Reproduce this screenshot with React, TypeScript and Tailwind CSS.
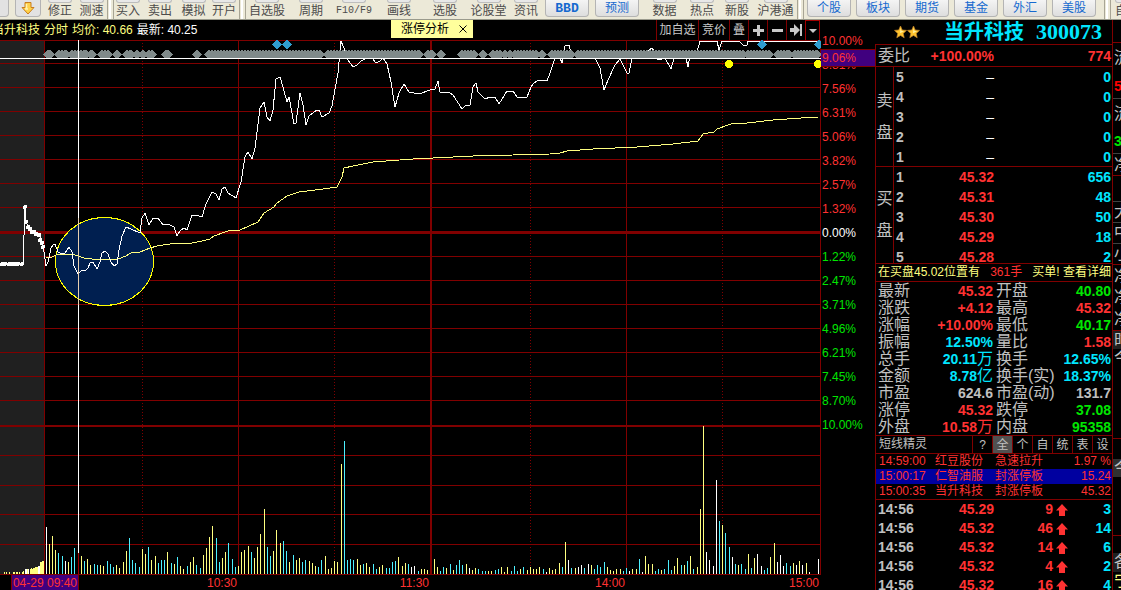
import React from 'react';

type Tone = 'red' | 'green' | 'cyan' | 'gray';

const toneClass: Record<Tone, string> = {
  red: 'text-[#ff3232]',
  green: 'text-[#00e600]',
  cyan: 'text-[#00e6ff]',
  gray: 'text-[#c0c0c0]',
};

/* ---------- Toolbar ---------- */

interface ToolItem {
  label: string;
  width: string;
}

const toolGroups: ToolItem[][] = [
  [
    { label: '修正', width: 'w-8' },
    { label: '测速', width: 'w-[31px]' },
  ],
  [
    { label: '买入', width: 'w-7' },
    { label: '卖出', width: 'w-9' },
    { label: '模拟', width: 'w-[31px]' },
    { label: '开户', width: 'w-[30px]' },
  ],
  [
    { label: '自选股', width: 'w-[42px]' },
    { label: '周期', width: 'w-[46px]' },
    { label: 'F10/F9', width: 'w-10' },
    { label: '画线', width: 'w-[50px]' },
    { label: '选股', width: 'w-[42px]' },
    { label: '论股堂', width: 'w-[45px]' },
    { label: '资讯', width: 'w-[30px]' },
  ],
];

const dataTools: ToolItem[] = [
  { label: '数据', width: 'w-[39px]' },
  { label: '热点', width: 'w-9' },
  { label: '新股', width: 'w-[34px]' },
  { label: '沪港通', width: 'w-[43px]' },
];

const markets = ['个股', '板块', '期货', '基金', '外汇', '美股'];

const ToolButton: React.FC<{ item: ToolItem }> = ({ item }) => (
  <button type="button" className={`${item.width} flex h-full shrink-0 flex-col items-center text-xs leading-4 whitespace-nowrap text-[#4c4c4c]`}>
    <span className="h-[3px] w-6 shrink-0 rounded-b-sm border border-t-0 border-[#bdbdbd] bg-[#e8e8e8]" />
    {item.label === 'F10/F9' ? <span className="font-['Liberation_Mono',monospace] text-[10px]">{item.label}</span> : item.label}
  </button>
);

const Divider = () => (
  <span className="flex h-full w-[7px] shrink-0 justify-between border-l border-[#a8a595] bg-white">
    <span className="w-px bg-[#ece9d8]" />
    <span className="w-[3px] border-r border-[#a8a595] bg-[#ece9d8]" />
  </span>
);

const PillButton: React.FC<{ label: string }> = ({ label }) => (
  <button type="button" className="h-[17px] w-11 shrink-0 rounded-b-sm border border-t-0 border-[#b4b4b4] bg-linear-to-b from-[#f4f4f4] to-[#dedede] text-xs leading-4 text-[#1569cf]">
    {label === 'BBD' ? <b className="font-['Liberation_Mono',monospace] text-[13px]">{label}</b> : label}
  </button>
);

const Toolbar = () => (
  <header className="flex h-5 shrink-0 overflow-hidden border-b border-[#9a9a8c] bg-[#ece9d8]">
    <span className="mr-1.5 h-[17px] w-[9px] shrink-0 rounded-br-sm border border-t-0 border-l-0 border-[#b4b4b4] bg-[#e2e2e2]" />
    <button type="button" aria-label="下载" className="mr-[3px] flex h-[17px] w-[26px] shrink-0 items-start justify-center rounded-b-sm border border-t-0 border-[#b4b4b4] bg-[#e2e2e2]">
      <svg width="14" height="15" viewBox="0 0 14 15">
        <path d="M4 2.5h6v5h3L7 14 1 7.5h3z" fill="#ffd24a" stroke="#c87d1e" />
        <path d="M5.5 4v5M4 9h3" stroke="#fff3b0" strokeWidth="1.5" />
      </svg>
    </button>
    {toolGroups.map((group, i) => (
      <React.Fragment key={i}>
        {i > 0 && <Divider />}
        {group.map(item => <ToolButton key={item.label} item={item} />)}
      </React.Fragment>
    ))}
    <div className="mr-1.5 ml-1 flex shrink-0 gap-1.5">
      <PillButton label="BBD" />
      <PillButton label="预测" />
    </div>
    {dataTools.map(item => <ToolButton key={item.label} item={item} />)}
    <Divider />
    <div className="mr-2 ml-[3px] flex shrink-0 gap-[5px]">
      {markets.map(name => <PillButton key={name} label={name} />)}
    </div>
    <Divider />
    <ToolButton item={{ label: '自选', width: 'w-8' }} />
  </header>
);

/* ---------- Intraday chart ---------- */

const priceLine =
  '44,252 46,266 48,262 49,258 51,248 53,245 55,244 58,252 62,254 65,253 69,247 72,252 74,266 78,274 82,270 85,271 88,268 90,263 93,262 97,269 100,262 102,253 105,251 108,254 111,262 114,266 117,264 119,250 122,236 126,227 131,229 140,233 142,218 145,213 149,225 153,218 158,218 163,225 168,224 174,227 177,236 180,231 184,228 187,230 192,215 196,215 202,217 206,204 212,192 216,194 219,200 222,189 225,187 228,193 236,198 241,182 245,157 248,152 252,159 255,148 260,108 264,102 267,117 270,121 273,110 276,79 280,77 283,87 287,102 289,97 294,124 296,123 300,93 303,105 306,125 309,116 317,110 319,110 322,117 329,113 332,106 338,73 341,41 346,53 348,60 353,67 357,65 361,61 367,58 372,58 376,63 380,61 383,58 387,64 391,82 395,107 399,93 404,84 409,92 419,94 430,90 435,89 438,81 440,92 450,93 453,95 462,109 466,105 470,105 473,87 476,83 478,92 485,99 490,97 495,97 499,104 507,91 513,91 517,97 527,97 531,87 534,83 539,80 547,81 550,73 555,58 560,58 562,63 565,46 569,45 571,52 580,57 595,58 600,68 604,90 608,80 615,65 620,59 627,73 629,73 632,58 640,59 648,51 652,48 654,51 658,60 665,58 671,69 674,58 686,58 688,67 690,55 697,52 700,41 717,41 719,50 722,41 739,41 743,45 747,45 748,41 818,41';

const averageLine =
  '46,258 52,257 56,255 72,254 78,256 84,258 92,259 118,259 126,256 131,253 140,252 150,248 157,246 170,244 192,243 202,241 210,239 214,236 228,231 240,230 258,222 264,213 274,207 277,203 287,196 299,192 323,189 337,187 342,177 344,168 353,166 373,162 413,159 473,156 513,155 550,154 560,153 567,151 593,149 637,147 673,144 698,141 703,134 714,132 717,129 731,124 747,123 773,120 801,118 818,117';

// x, colour (y/c/w), height
const volumes =
  '46w47 49y30 52y38 55y24 58c21 62c18 65w13 68y12 71c17 74c26 81y18 84c13 87y15 90y9 94c10 97c9 100y9 103y8 107c13 110c10 113c7 116y9 119y6 123y12 126y23 129c36 132c14 135c11 139c7 142y25 145y20 148c27 151y14 155y18 158c11 161c14 164c14 167y22 171c11 174y10 177c17 180y8 183y5 187c8 190y12 193y17 196c9 200c6 203y19 206y26 209y37 212y48 216c36 219c12 222y16 225y22 228c31 232c15 235c7 238y8 241y22 244y24 248y28 251c22 254y16 257y27 260y40 264y65 267c27 270c18 273y23 276y44 280y31 283c33 286c23 289y12 293c19 296y14 299y16 302c12 305c14 309y13 312y11 315y8 318c7 321c14 325y18 328y5 331y6 334y13 337y12 341y110 344c133 347c14 350c15 353c14 357y15 360y9 363c10 366y11 369y7 373c10 376c5 379y7 382y9 386c6 389c6 392c12 395c13 398y17 402y8 405y11 408c10 411w7 414w8 418c3 421y5 424y5 427y4 434y15 437y7 440c3 443c7 446y6 450c10 453y4 456c9 459c14 462c9 466y10 469w6 472y4 475y6 478c5 482c3 485c3 488y3 491y3 495c4 498c5 501y7 504y2 507y7 511c3 514c8 517c3 520y5 523c7 527y4 530y7 533y5 536y5 539y7 543c5 546w2 549y6 552y4 555y5 559y11 562c7 565y32 568w14 571c6 575y6 578w7 581w9 584c6 588w10 591y9 594c5 597c9 600c7 604c12 607y7 610y4 613y3 616y5 620y5 623c3 626c6 629w3 632y5 636y5 639c15 642w2 645y18 648y10 652y10 655c3 658c5 661y4 664c5 668c14 671c4 674y8 677y16 681c9 684y9 687c13 690y18 693c5 697y7 700y65 703y148 706w22 709w14 713w8 716w94 719c53 722y49 725c41 729c27 732w17 735c10 738y9 741c10 745c5 748y20 751c6 754y16 757w20 761w8 764c4 767c6 770y17 774y31 777w12 780w19 783w8 786c11 790c8 793y11 796w9 799y13 802w9 806y11 809w2 818w15';

const preVolumes =
  '4y2 6y2 9y2 13y2 14y2 16y2 17y2 19y2 22y2 23y3 25w5 26w5 27y5 28w5 30y5 31y6 32y5 33y6 34y6 35y7 36y7 37y7 38w8 39w8 40y12 41y12 42y13 43y13';

const volumeColor: Record<string, string> = { y: '#ffff80', c: '#4df0ff', w: '#ffffff' };

const parseBars = (text: string) =>
  text.split(' ').map(token => {
    const [, x, color, height] = token.match(/(\d+)([ycw])(\d+)/)!;
    return { x: Number(x), fill: volumeColor[color], height: Number(height) };
  });

const bars = parseBars(`${preVolumes} ${volumes}`);

// [first, last] centre of every run of signal markers
const markerRuns = [
  [47, 49], [58, 65], [71, 85], [90, 91], [101, 107], [116, 116], [126, 130], [136, 136], [142, 142], [148, 151],
  [165, 167], [196, 196], [208, 319], [327, 418], [427, 431], [440, 440], [461, 473], [482, 482], [492, 492],
  [496, 499], [504, 504], [509, 509], [514, 535], [541, 541], [551, 570], [577, 742], [747, 768], [777, 788], [794, 816],
];

const markers = markerRuns.flatMap(([first, last]) => {
  const xs: number[] = [];
  for (let x = first; x < last; x += 3) xs.push(x);
  return [...xs, last];
});

const diamond = (x: number, y: number, r: number) => `M${x - r} ${y}L${x} ${y - r}L${x + r} ${y}L${x} ${y + r}z`;

const gridRows = [40, 63, 87, 111, 135, 159, 183, 207, 256, 280, 304, 328, 352, 376, 400, 455, 485, 514, 544, 574];
const preDots = [[25, 207], [26, 222], [28, 227], [30, 229], [32, 232], [34, 232], [36, 234], [39, 235], [40, 240], [42, 243], [43, 247]];
const openDots = [2, 5, 9, 12, 15, 18, 22];

const PriceChart = () => (
  <svg viewBox="0 40 821 535" preserveAspectRatio="none" shapeRendering="crispEdges" className="block min-h-0 w-full flex-1">
    <rect x="0" y="40" width="44" height="535" fill="#202020" />
    <g fill="#800000">
      {gridRows.map(y => <rect key={y} x="0" y={y} width="821" height="1" />)}
      <rect x="0" y="231" width="821" height="3" />
      <rect x="0" y="425" width="821" height="2" />
      {[44, 238, 626, 820].map(x => <rect key={x} x={x} y="40" width="1" height="535" />)}
      <rect x="430" y="40" width="2" height="535" />
    </g>
    <path d="M142.5 43V574M334.5 43V574M530.5 43V574M722.5 43V574" stroke="#800000" strokeDasharray="1 2" />

    <ellipse cx="104.5" cy="261.5" rx="49" ry="44" fill="#001f50" stroke="#ffff00" />
    {bars.map(bar => <rect key={bar.x} x={bar.x} y={574 - bar.height} width="1" height={bar.height} fill={bar.fill} />)}

    <polyline points={averageLine} fill="none" stroke="#ffff80" />
    <polyline points={priceLine} fill="none" stroke="#ffffff" />
    <path d="M0 264H23L25 207L26 222L29 228L40 236L44 252" fill="none" stroke="#ffffff" />
    {preDots.map(([x, y]) => <circle key={`${x}-${y}`} cx={x} cy={y} r="2" fill="#ffffff" />)}
    {openDots.map(x => <circle key={x} cx={x} cy="264" r="2" fill="#ffffff" />)}

    {markers.map(x => <path key={x} d={diamond(x + 0.5, 54.5, 5)} fill="#808a8a" />)}
    {[276.5, 286.5, 761.5, 818.5].map(x => <path key={x} d={diamond(x, 44.5, 5)} fill="#2f9ccf" />)}
    <circle cx="729" cy="64" r="4" fill="#ffff00" />
    <circle cx="818" cy="64" r="4" fill="#ffff00" />

    {/* crosshair */}
    <rect x="0" y="58" width="821" height="1" fill="#ffffff" />
    <rect x="78" y="40" width="1" height="513" fill="#ffffff" />
    <rect x="78" y="218" width="1" height="87" fill="#e8d0b0" />
    <rect x="78" y="553" width="1" height="21" fill="#a00000" />
  </svg>
);

const scale = ['10.00%', '8.81%', '7.56%', '6.31%', '5.06%', '3.82%', '2.57%', '1.32%', '0.00%', '1.22%', '2.47%', '3.71%', '4.96%', '6.21%', '7.45%', '8.70%', '10.00%'];

const ZERO_INDEX = 8;

const scaleColor = (i: number) => {
  if (i === ZERO_INDEX) return 'text-white';
  return i < ZERO_INDEX ? 'text-[#ff3232]' : 'text-[#00e600]';
};

const iconButton = 'flex w-[19px] items-center justify-center border-l border-[#800000]';

const ChartHeader = () => (
  <div className="flex h-5 shrink-0 overflow-hidden text-xs leading-5 whitespace-nowrap">
    <p className="flex w-[391px] gap-1 text-[#ffff80]">
      <span className="-ml-2">当升科技</span>
      <span>分时</span>
      <span>均价: 40.66</span>
      <span className="text-white">最新: 40.25</span>
    </p>
    <div className="flex h-[18px] items-center gap-2.5 bg-[#ffff9c] pr-1.5 pl-2.5 text-black">
      <span className="leading-4">涨停分析</span>
      <button type="button" aria-label="关闭">
        <svg width="8" height="8" viewBox="0 0 8 8"><path d="M.5.5l7 7M7.5.5l-7 7" stroke="#000" /></svg>
      </button>
    </div>
    <div className="mr-px ml-auto flex text-[#c8c8c8]">
      <button type="button" className="w-[42px] border-l border-[#800000]">加自选</button>
      <button type="button" className="w-[31px] border-l border-[#800000]">竞价</button>
      <button type="button" className="w-[19px] border-l border-[#800000]">叠</button>
      <button type="button" aria-label="放大" className={iconButton}>
        <svg width="11" height="11" viewBox="0 0 11 11"><path d="M5.5 0v11M0 5.5h11" stroke="#c8c8c8" strokeWidth="3" /></svg>
      </button>
      <button type="button" aria-label="缩小" className={iconButton}>
        <svg width="11" height="11" viewBox="0 0 11 11"><path d="M0 5.5h11" stroke="#c8c8c8" strokeWidth="3" /></svg>
      </button>
      <button type="button" aria-label="末尾" className={iconButton}>
        <svg width="12" height="12" viewBox="0 0 12 12"><path d="M0 4h4V0l6 6-6 6V8H0zM10 0h2v12h-2z" fill="#c8c8c8" /></svg>
      </button>
      <button type="button" aria-label="更多" className="flex w-[15px] items-center justify-center border border-b-0 border-[#a00000]">
        <svg width="8" height="4" viewBox="0 0 8 4"><path d="M0 0h8L4 4z" fill="#c8c8c8" /></svg>
      </button>
    </div>
  </div>
);

const TimeAxis = () => (
  <div className="grid h-[15px] shrink-0 grid-cols-[79fr_160fr_192fr_196fr_194fr] text-right text-xs leading-4 text-[#ff3232]">
    <span className="flex justify-end"><span className="border-r border-l border-[#800000] bg-[#40007f] px-px whitespace-nowrap">04-29 09:40</span></span>
    {['10:30', '11:30', '14:00', '15:00'].map(time => <span key={time} className="pr-0.5">{time}</span>)}
  </div>
);

const ChartPanel = () => (
  <main className="flex min-w-0 flex-1">
    <section className="flex min-w-0 flex-1 flex-col">
      <ChartHeader />
      <PriceChart />
      <TimeAxis />
    </section>
    <aside className="relative flex w-[54px] shrink-0 flex-col pt-[9px] pb-[153px] text-xs">
      {scale.map((label, i) => (
        <span key={i} className={`flex flex-1 items-center pl-px ${scaleColor(i)}`}>{label}</span>
      ))}
      <span className="absolute top-[29px] left-0 flex h-[18px] w-full items-center border-y border-[#800000] bg-[#40007f] pl-px text-[#ff3232]">9.06%</span>
    </aside>
  </main>
);

/* ---------- Quote panel ---------- */

const sells = [5, 4, 3, 2, 1].map(level => ({ level, price: '–', volume: '0' }));
const buys = [
  { level: 1, price: '45.32', volume: '656' },
  { level: 2, price: '45.31', volume: '48' },
  { level: 3, price: '45.30', volume: '50' },
  { level: 4, price: '45.29', volume: '18' },
  { level: 5, price: '45.28', volume: '2' },
];

interface Stat {
  name: string;
  value: string;
  tone: Tone;
}

const stats: [Stat, Stat][] = [
  [{ name: '最新', value: '45.32', tone: 'red' }, { name: '开盘', value: '40.80', tone: 'green' }],
  [{ name: '涨跌', value: '+4.12', tone: 'red' }, { name: '最高', value: '45.32', tone: 'red' }],
  [{ name: '涨幅', value: '+10.00%', tone: 'red' }, { name: '最低', value: '40.17', tone: 'green' }],
  [{ name: '振幅', value: '12.50%', tone: 'cyan' }, { name: '量比', value: '1.58', tone: 'red' }],
  [{ name: '总手', value: '20.11万', tone: 'cyan' }, { name: '换手', value: '12.65%', tone: 'cyan' }],
  [{ name: '金额', value: '8.78亿', tone: 'cyan' }, { name: '换手(实)', value: '18.37%', tone: 'cyan' }],
  [{ name: '市盈', value: '624.6', tone: 'gray' }, { name: '市盈(动)', value: '131.7', tone: 'gray' }],
  [{ name: '涨停', value: '45.32', tone: 'red' }, { name: '跌停', value: '37.08', tone: 'green' }],
  [{ name: '外盘', value: '10.58万', tone: 'red' }, { name: '内盘', value: '95358', tone: 'green' }],
];

const alerts = [
  { time: '14:59:00', name: '红豆股份', event: '急速拉升', value: '1.97 %', active: false },
  { time: '15:00:17', name: '仁智油服', event: '封涨停板', value: '15.24', active: true },
  { time: '15:00:35', name: '当升科技', event: '封涨停板', value: '45.32', active: false },
];

const trades = [
  { price: '45.29', volume: 9, count: 3 },
  { price: '45.32', volume: 46, count: 14 },
  { price: '45.32', volume: 14, count: 6 },
  { price: '45.32', volume: 4, count: 2 },
  { price: '45.32', volume: 16, count: 4 },
];

const Star = () => (
  <svg width="13" height="14" viewBox="0 0 13 14">
    <path d="M6.5 1l1.700 4 4.300.4-3.300 3 1 4.300-3.700-2.300-3.700 2.300 1-4.300-3.300-3L4.800 5z" fill="#ffc42e" stroke="#c98a2b" strokeWidth=".7" />
    <path d="M6.5 3l1 3 2.500.3-4 2z" fill="#fff0a0" />
  </svg>
);

interface Level {
  level: number;
  price: string;
  volume: string;
}

const OrderBook: React.FC<{ side: string; levels: Level[]; height: string }> = ({ side, levels, height }) => (
  <div className={`flex ${height} border-b border-[#800000]`}>
    <div className="flex w-[18px] shrink-0 flex-col items-center justify-center border-r border-[#800000] text-base leading-8 text-[#c0c0c0]">
      <span>{side}</span>
      <span>盘</span>
    </div>
    <table className="h-[100px] flex-1 text-sm font-bold">
      <tbody>
        {levels.map(row => (
          <tr key={row.level} className="h-5 leading-4">
            <td className="w-4 p-0 pl-0.5 text-[#c0c0c0]">{row.level}</td>
            <td className={`w-[84px] p-0 text-right ${row.price === '–' ? 'font-normal text-white' : 'text-[#ff3232]'}`}>{row.price}</td>
            <td className="p-0 pr-px text-right text-[#00e6ff]">{row.volume}</td>
          </tr>
        ))}
      </tbody>
    </table>
  </div>
);

const StatCells: React.FC<{ stat: Stat }> = ({ stat }) => {
  const unit = stat.value.match(/[万亿]$/)?.[0];
  return (
    <>
      <th scope="row" className="p-0 pl-0.5 text-left text-base leading-4 font-normal whitespace-nowrap text-[#c0c0c0]">{stat.name}</th>
      <td className={`p-0 pr-px text-right leading-4 font-bold whitespace-nowrap ${toneClass[stat.tone]}`}>
        {unit ? (
          <span className="flex h-4 items-center justify-end">
            {stat.value.replace(unit, '')}
            <span className="text-base leading-4 font-normal">{unit}</span>
          </span>
        ) : stat.value}
      </td>
    </>
  );
};

const QuotePanel = () => (
  <aside className="flex w-[238px] shrink-0 flex-col border-r border-[#800000]">
    <h1 className="flex h-6 shrink-0 items-center pr-2.5 pl-[19px] whitespace-nowrap text-[#00e6ff]">
      <Star />
      <Star />
      <span className="ml-auto text-xl leading-6 font-bold">当升科技</span>
      <span className="ml-3 font-['Liberation_Serif',serif] text-[22px] leading-6 font-bold">300073</span>
    </h1>
    <div className="flex-1 border-t border-l border-[#800000] text-sm">
      <div className="flex h-[22px] items-center border-b border-[#800000] pr-px pl-0.5 font-bold text-[#ff3232]">
        <span className="text-base font-normal text-[#c0c0c0]">委比</span>
        <span className="w-[84px] text-right">+100.00%</span>
        <span className="ml-auto">774</span>
      </div>
      <OrderBook side="卖" levels={sells} height="h-[100px]" />
      <OrderBook side="买" levels={buys} height="h-[97px]" />

      <p className="flex h-[18px] justify-between border-b border-[#800000] pr-px pl-0.5 text-xs leading-4 whitespace-nowrap text-[#ffff80]">
        <span>在买盘45.02位置有</span>
        <span className="text-[#ff3232]">361手</span>
        <a href="#detail">买单! 查看详细</a>
      </p>

      <table className="w-full table-fixed">
        <colgroup>
          <col className="w-[34px]" />
          <col className="w-[84px]" />
          <col className="w-[62px]" />
          <col />
        </colgroup>
        <tbody>
          {stats.map(([left, right]) => (
            <tr key={left.name} className="h-[17px]">
              <StatCells stat={left} />
              <StatCells stat={right} />
            </tr>
          ))}
        </tbody>
      </table>

      <div className="flex h-[19px] border-y border-[#800000] text-xs leading-4 text-[#c0c0c0]">
        <span className="flex-1 pl-[3px]">短线精灵</span>
        {['?', '全', '个', '自', '统', '表', '设'].map(tab => (
          <button key={tab} type="button" className={`w-5 border-l border-[#800000] ${tab === '全' ? 'bg-[#505050]' : ''}`}>{tab}</button>
        ))}
      </div>

      <table className="w-full table-fixed text-xs text-[#ff3232]">
        <tbody>
          {alerts.map(row => (
            <tr key={row.time} className={`h-[15px] leading-[15px] ${row.active ? 'bg-[#0000a0]' : ''}`}>
              <td className="w-[59px] p-0 pl-[3px]">{row.time}</td>
              <td className="w-[60px] p-0">{row.name}</td>
              <td className="w-[60px] p-0">{row.event}</td>
              <td className="p-0 pr-px text-right">{row.value}</td>
            </tr>
          ))}
        </tbody>
      </table>

      <table className="w-full table-fixed border-t border-[#800000] font-bold">
        <tbody>
          {trades.map((row, i) => (
            <tr key={i} className="h-[19px] leading-[19px]">
              <td className="w-[50px] p-0 pl-0.5 text-[#c0c0c0]">14:56</td>
              <td className="w-[68px] p-0 text-right text-[#ff3232]">{row.price}</td>
              <td className="w-[74px] p-0 text-[#ff3232]">
                <span className="flex items-center justify-end gap-[3px]">
                  {row.volume}
                  <svg width="12" height="12" viewBox="0 0 12 12"><path d="M6 0l6 6.500H9V12H3V6.500H0z" fill="#ff3232" /></svg>
                </span>
              </td>
              <td className="p-0 pr-px text-right text-[#00e6ff]">{row.count}</td>
            </tr>
          ))}
        </tbody>
      </table>
    </div>
  </aside>
);

/* ---------- Edge of the neighbouring panel ---------- */

const edgeCells = [
  { text: '', style: 'h-[23px] border-[#800000]' },
  { text: '流', style: 'h-[31px] border-transparent text-[#c0c0c0]' },
  { text: '5', style: 'h-[25px] border-[#404040] text-sm font-bold text-[#ff0000]' },
  { text: '流', style: 'h-[30px] border-transparent text-[#c0c0c0]' },
  { text: '3', style: 'h-[25px] border-[#404040] text-sm font-bold text-[#00e600]' },
  { text: '净', style: 'h-[22px] border-[#800000] text-[#c0c0c0]' },
  { text: '', style: 'h-[26px] border-[#404040]' },
  { text: '大', style: 'h-[21px] border-[#404040] text-[#c0c0c0]' },
  { text: '中', style: 'h-[21px] border-[#404040] text-[#c0c0c0]' },
  { text: '小', style: 'h-[21px] border-[#800000] text-[#c0c0c0]' },
  { text: '净', style: 'h-[22px] border-transparent text-[#c0c0c0]' },
  { text: '净', style: 'h-5 border-transparent text-[#c0c0c0]' },
  { text: '净', style: 'h-6 border-[#800000] text-[#c0c0c0]' },
  { text: '时', style: 'h-[18px] border-transparent bg-[#202020] text-[#c0c0c0]' },
  { text: '今', style: 'h-[18px] border-transparent text-[#c0c0c0]' },
  { text: '', style: 'h-[72px] border-[#800000]' },
  { text: '', style: 'h-5 border-transparent' },
  { text: '今', style: 'h-[18px] border-transparent bg-[#303030] text-[#c0c0c0]' },
  { text: '', style: 'h-[59px] border-[#800000]' },
  { text: '', style: 'h-[17px] border-transparent' },
  { text: '各', style: 'h-[19px] border-transparent bg-[#202020] text-[#c0c0c0]' },
  { text: '宁', style: 'h-[18px] border-transparent text-[#ffff80]' },
];

const EdgePanel = () => (
  <aside className="flex w-2 shrink-0 flex-col overflow-hidden text-base">
    {edgeCells.map((cell, i) => (
      <span key={i} className={`flex shrink-0 items-center border-b pl-px ${cell.style}`}>{cell.text}</span>
    ))}
  </aside>
);

export default function App() {
  return (
    <div className="flex h-screen flex-col overflow-hidden bg-black font-['Liberation_Sans','Noto_Sans_CJK_SC',sans-serif]">
      <Toolbar />
      <div className="flex min-h-0 flex-1">
        <ChartPanel />
        <QuotePanel />
        <EdgePanel />
      </div>
    </div>
  );
}
